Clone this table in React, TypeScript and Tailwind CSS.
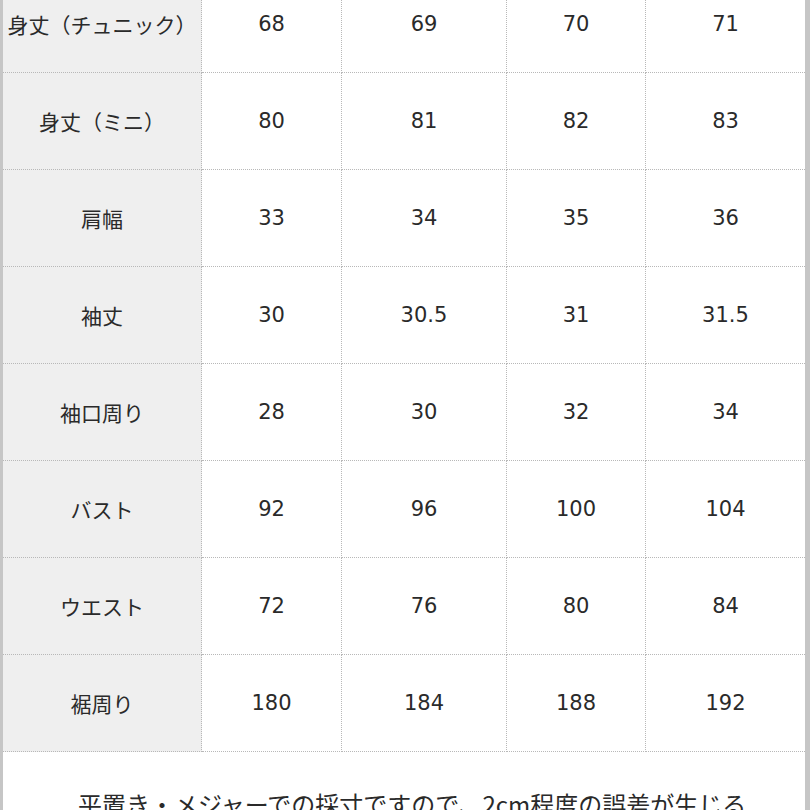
const rows: [string, string[]][] = [
  ["身丈（チュニック）", ["68", "69", "70", "71"]],
  ["身丈（ミニ）", ["80", "81", "82", "83"]],
  ["肩幅", ["33", "34", "35", "36"]],
  ["袖丈", ["30", "30.5", "31", "31.5"]],
  ["袖口周り", ["28", "30", "32", "34"]],
  ["バスト", ["92", "96", "100", "104"]],
  ["ウエスト", ["72", "76", "80", "84"]],
  ["裾周り", ["180", "184", "188", "192"]],
];

export default function App() {
  return (
    <div className="w-[810px] h-[810px] overflow-hidden bg-white border-l-[3px] border-r-[5px] border-[#c6c6c6] text-[#2a2a2a]">
      <div className="-mt-[24px] grid grid-cols-[199px_140px_165px_139px_159px]">
        {rows.map(([label, values]) => (
          <div key={label} className="contents">
            <div
              className="h-[97px] pt-[2px] flex items-center justify-center bg-[#efefef] border-b border-r border-dotted border-[#b8b8b8] text-[21px] whitespace-nowrap"
              style={{ fontFamily: '"Noto Sans CJK JP", sans-serif' }}
            >
              {label}
            </div>
            {values.map((v, i) => (
              <div
                key={i}
                className={`h-[97px] pt-[2px] flex items-center justify-center border-b border-dotted border-[#b8b8b8] text-[21px] ${
                  i < 3 ? "border-r" : ""
                }`}
                style={{ fontFamily: '"DejaVu Sans", sans-serif' }}
              >
                {v}
              </div>
            ))}
          </div>
        ))}
      </div>
      <p
        className="pt-[34px] pl-[75px] text-[24px] leading-[1.5] whitespace-nowrap"
        style={{ fontFamily: '"Noto Sans CJK JP", sans-serif' }}
      >
        平置き・メジャーでの採寸ですので、2cm程度の誤差が生じる
      </p>
    </div>
  );
}
